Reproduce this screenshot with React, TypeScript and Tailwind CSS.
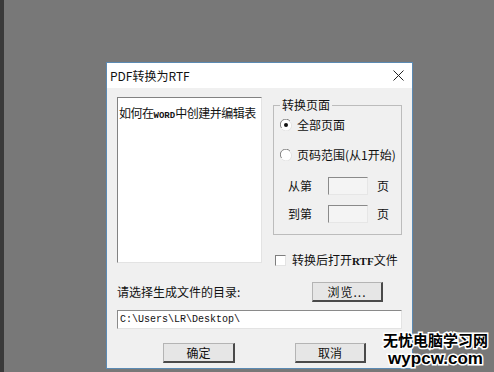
import type { ReactNode } from 'react';

const cjk = "font-['Noto_Sans_CJK_SC','Noto_Sans',sans-serif]";

function Radio({ checked }: { checked?: boolean }) {
  return (
    <svg width="12" height="12" viewBox="0 0 12 12" className="shrink-0">
      <circle cx="6" cy="6" r="5.5" fill="#ffffff" />
      <path d="M10 2.2 A5.2 5.2 0 0 0 1.5 9" fill="none" stroke="#808080" strokeWidth="1" />
      <path d="M2 10 A5.2 5.2 0 0 0 10.4 3.2" fill="none" stroke="#e3e3e3" strokeWidth="1" />
      {checked && <circle cx="6" cy="6" r="2" fill="#111111" />}
    </svg>
  );
}

function WinButton({ children, className }: { children: ReactNode; className: string }) {
  return (
    <div
      className={`flex items-center justify-center h-[20px] bg-[#e6e6e6] border-t border-l border-[#b4b4b4] border-r-2 border-b-2 border-r-[#4a4a4a] border-b-[#4a4a4a] text-[12px] text-[#111] ${className}`}
    >
      {children}
    </div>
  );
}

export default function App() {
  return (
    <div className={`relative w-[494px] h-[372px] bg-[#787878] flex overflow-hidden ${cjk}`}>
      <div className="w-[4px] h-full bg-[#3a3a3a]" />

      {/* 对话框 */}
      <div className="ml-[102px] mt-[62px] w-[307px] h-[307px] border border-[#5b8ab3] bg-[#f0f0f0] flex flex-col">
        <div className="h-[25px] bg-white flex items-center justify-between pl-[3px] pr-[8px]">
          <span className="text-[12px] leading-[14px] text-[#111]">PDF转换为RTF</span>
          <svg width="11" height="11" viewBox="0 0 11 11">
            <path d="M0.5 0.5 L10.5 10.5 M10.5 0.5 L0.5 10.5" stroke="#222" strokeWidth="1" />
          </svg>
        </div>

        <div className="flex flex-col px-[10px] pt-[9px]">
          <div className="flex gap-[11px]">
            {/* 文件列表 */}
            <div className="w-[145px] h-[166px] overflow-hidden bg-white border-t border-l border-[#828282] border-r border-b border-r-[#e3e3e3] border-b-[#e3e3e3] pl-[1px] pt-[1px]">
              <span className="text-[12px] leading-[14px] tracking-[-0.5px] text-[#111] whitespace-nowrap">
                如何在<span className="font-['Liberation_Mono',monospace] font-bold text-[9px] tracking-normal">WORD</span>中创建并编辑表
              </span>
            </div>

            <div className="flex flex-col w-[129px]">
              <div className="relative mt-[8px] h-[130px] border border-[#bcbcbc] flex flex-col pt-[11px]">
                <span className="absolute -top-[8px] left-[6px] bg-[#f0f0f0] px-[2px] text-[12px] leading-[14px] text-[#111]">
                  转换页面
                </span>
                <div className="flex items-center h-[16px] pl-[6px] gap-[5px]">
                  <Radio checked />
                  <span className="text-[12px] leading-[14px] text-[#111]">全部页面</span>
                </div>
                <div className="flex items-center h-[16px] pl-[6px] gap-[5px] mt-[14px]">
                  <Radio />
                  <span className="text-[12px] leading-[14px] text-[#111] whitespace-nowrap">页码范围(从1开始)</span>
                </div>
                <div className="flex items-center h-[18px] mt-[14px] pl-[14px]">
                  <span className="text-[12px] leading-[14px] text-[#111] w-[40px]">从第</span>
                  <div className="w-[40px] h-[18px] bg-[#f4f4f4] border-t border-l border-[#8a8a8a] border-r border-b border-r-[#e6e6e6] border-b-[#e6e6e6]" />
                  <span className="ml-[9px] text-[12px] leading-[14px] text-[#111]">页</span>
                </div>
                <div className="flex items-center h-[18px] mt-[10px] pl-[14px]">
                  <span className="text-[12px] leading-[14px] text-[#111] w-[40px]">到第</span>
                  <div className="w-[40px] h-[18px] bg-[#f4f4f4] border-t border-l border-[#8a8a8a] border-r border-b border-r-[#e6e6e6] border-b-[#e6e6e6]" />
                  <span className="ml-[9px] text-[12px] leading-[14px] text-[#111]">页</span>
                </div>
              </div>

              <div className="flex items-center mt-[18px] pl-[2px] gap-[6px]">
                <div className="w-[11px] h-[11px] bg-white border-t border-l border-[#7e7e7e] border-r border-b border-r-[#e3e3e3] border-b-[#e3e3e3]" />
                <span className="text-[12px] leading-[14px] text-[#111] whitespace-nowrap">
                  转换后打开<span className="font-['Liberation_Serif',serif] font-bold text-[11px]">RTF</span>文件
                </span>
              </div>
            </div>
          </div>

          <div className="flex items-center justify-between mt-[14px] pr-[19px]">
            <span className="text-[12px] leading-[14px] text-[#111]">请选择生成文件的目录:</span>
            <WinButton className="w-[71px] tracking-[1px]">浏览...</WinButton>
          </div>

          <div className="mt-[8px] h-[19px] bg-white border-t border-l border-[#8a8a8a] border-r border-b border-r-[#e3e3e3] border-b-[#e3e3e3] flex items-center pl-[2px]">
            <span className="font-['Liberation_Mono',monospace] text-[10px] leading-[12px] text-[#111]">C:\Users\LR\Desktop\</span>
          </div>

          <div className="flex mt-[14px]">
            <WinButton className="ml-[46px] w-[72px]">确定</WinButton>
            <WinButton className="ml-[60px] w-[71px]">取消</WinButton>
          </div>
        </div>
      </div>

      {/* 水印 */}
      <div className="absolute left-[383px] top-[330px] flex flex-col items-center font-bold text-black [paint-order:stroke] [-webkit-text-stroke:3px_white]">
        <span className="text-[15px] leading-[19px]">无忧电脑学习网</span>
        <span className="font-['Liberation_Sans',sans-serif] text-[17px] leading-[19px]">wypcw.com</span>
      </div>
    </div>
  );
}
